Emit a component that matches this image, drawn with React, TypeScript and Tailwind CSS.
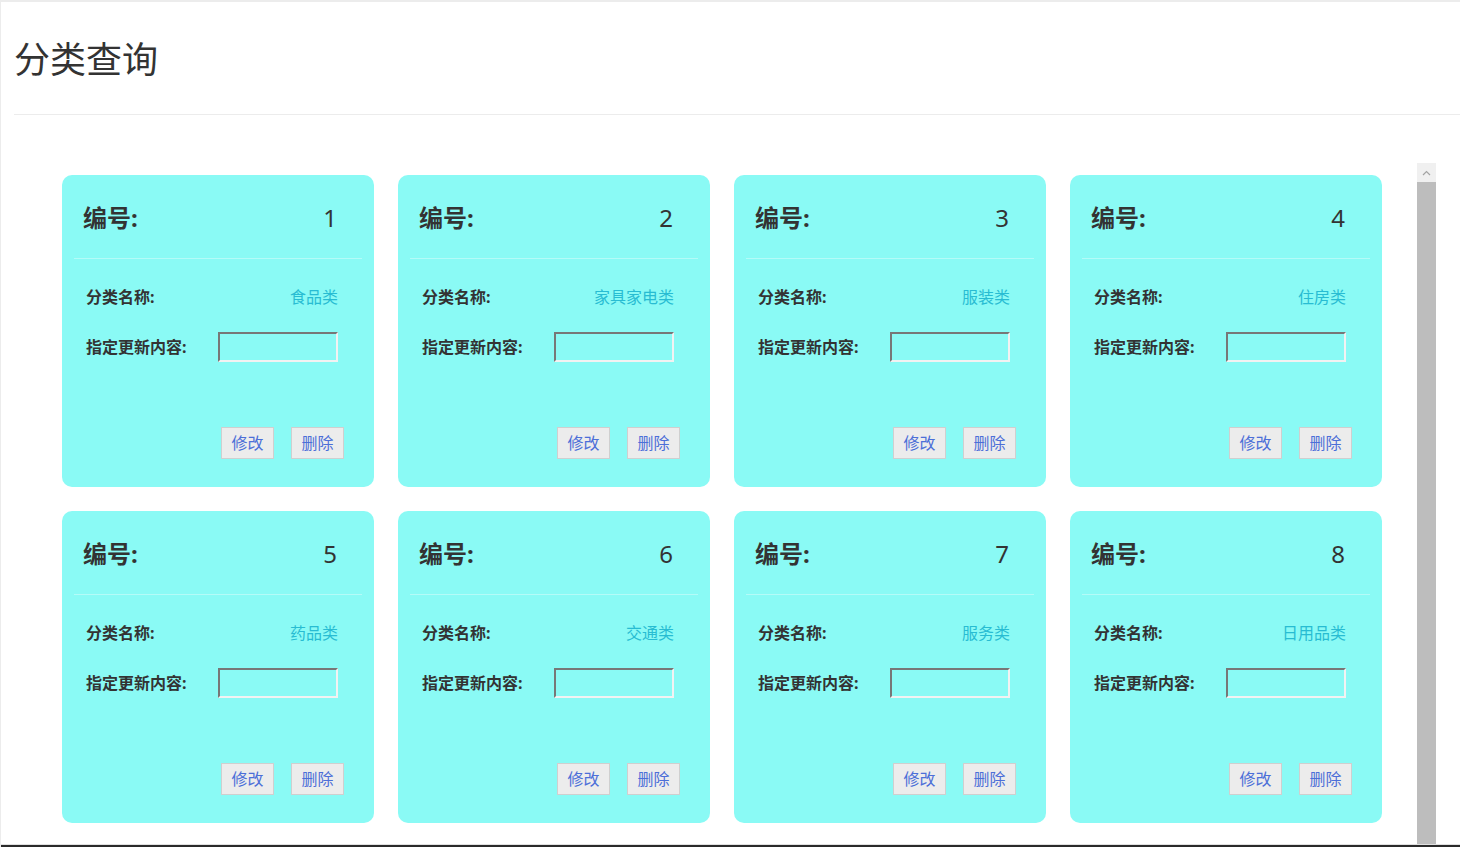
const categories = [
  { id: 1, name: '食品类' },
  { id: 2, name: '家具家电类' },
  { id: 3, name: '服装类' },
  { id: 4, name: '住房类' },
  { id: 5, name: '药品类' },
  { id: 6, name: '交通类' },
  { id: 7, name: '服务类' },
  { id: 8, name: '日用品类' },
];

function CategoryCard({ id, name }: { id: number; name: string }) {
  return (
    <div className="flex h-[312px] flex-col rounded-[10px] bg-[#8afaf5] p-[12px]">
      <div className="flex h-[72px] items-center justify-between border-b border-[#b4fbf8] pb-[10px] pl-[9px] pr-[25px] text-[24px] font-bold text-[#333]">
        <span>编号:</span>
        <span className="font-normal">{id}</span>
      </div>
      <div className="px-[12px] pt-[22px] text-[16px]">
        <div className="flex h-[32px] items-center justify-between pr-[12px]">
          <span className="font-bold text-[#333]">分类名称:</span>
          <span className="text-[#28bcd2]">{name}</span>
        </div>
        <div className="mt-[18px] flex h-[32px] items-center">
          <span className="w-[132px] shrink-0 font-bold text-[#333]">指定更新内容:</span>
          <input
            type="text"
            className="h-[30px] w-[120px] border-2 border-b-[#f2f2f2] border-l-[#777] border-r-[#f2f2f2] border-t-[#777] bg-transparent outline-none"
          />
        </div>
      </div>
      <div className="mb-[16px] mt-auto flex justify-end gap-[17px] pr-[18px]">
        <button className="h-[32px] w-[53px] border border-[#cfcfcf] bg-[#ececec] text-[16px] text-[#4c6fd8]">
          修改
        </button>
        <button className="h-[32px] w-[53px] border border-[#cfcfcf] bg-[#ececec] text-[16px] text-[#4c6fd8]">
          删除
        </button>
      </div>
    </div>
  );
}

export default function App() {
  return (
    <div
      className="flex h-[847px] flex-col overflow-hidden border-l border-t-2 border-[#ececec] bg-white"
      style={{ fontFamily: '"Noto Sans", "Noto Sans CJK SC", sans-serif' }}
    >
      <div className="pl-[13px]">
        <h1 className="h-[112px] pt-[36px] text-[36px] leading-[44px] text-[#333]">分类查询</h1>
        <div className="h-px bg-[#ececec]" />
      </div>

      <div className="mt-[48px] flex min-h-0 flex-1 pl-[13px]">
        <div className="min-w-0 flex-1 overflow-hidden pl-[48px] pt-[12px]">
          <div className="grid w-[1320px] grid-cols-[repeat(4,312px)] gap-[24px]">
            {categories.map(c => (
              <CategoryCard key={c.id} id={c.id} name={c.name} />
            ))}
          </div>
        </div>
        <div className="flex w-[19px] flex-col">
          <div className="flex h-[19px] items-center justify-center bg-[#f0f0f0]">
            <svg width="9" height="6" viewBox="0 0 9 6" fill="none">
              <path d="M1 5L4.5 1.5L8 5" stroke="#a3a3a3" strokeWidth="1.2" />
            </svg>
          </div>
          <div className="flex-1 bg-[#bdbdbd]" />
        </div>
        <div className="w-[24px]" />
      </div>

      <div className="h-px bg-[#e0e0e0]" />
      <div className="h-[2px] bg-[#2a2a2a]" />
    </div>
  );
}
